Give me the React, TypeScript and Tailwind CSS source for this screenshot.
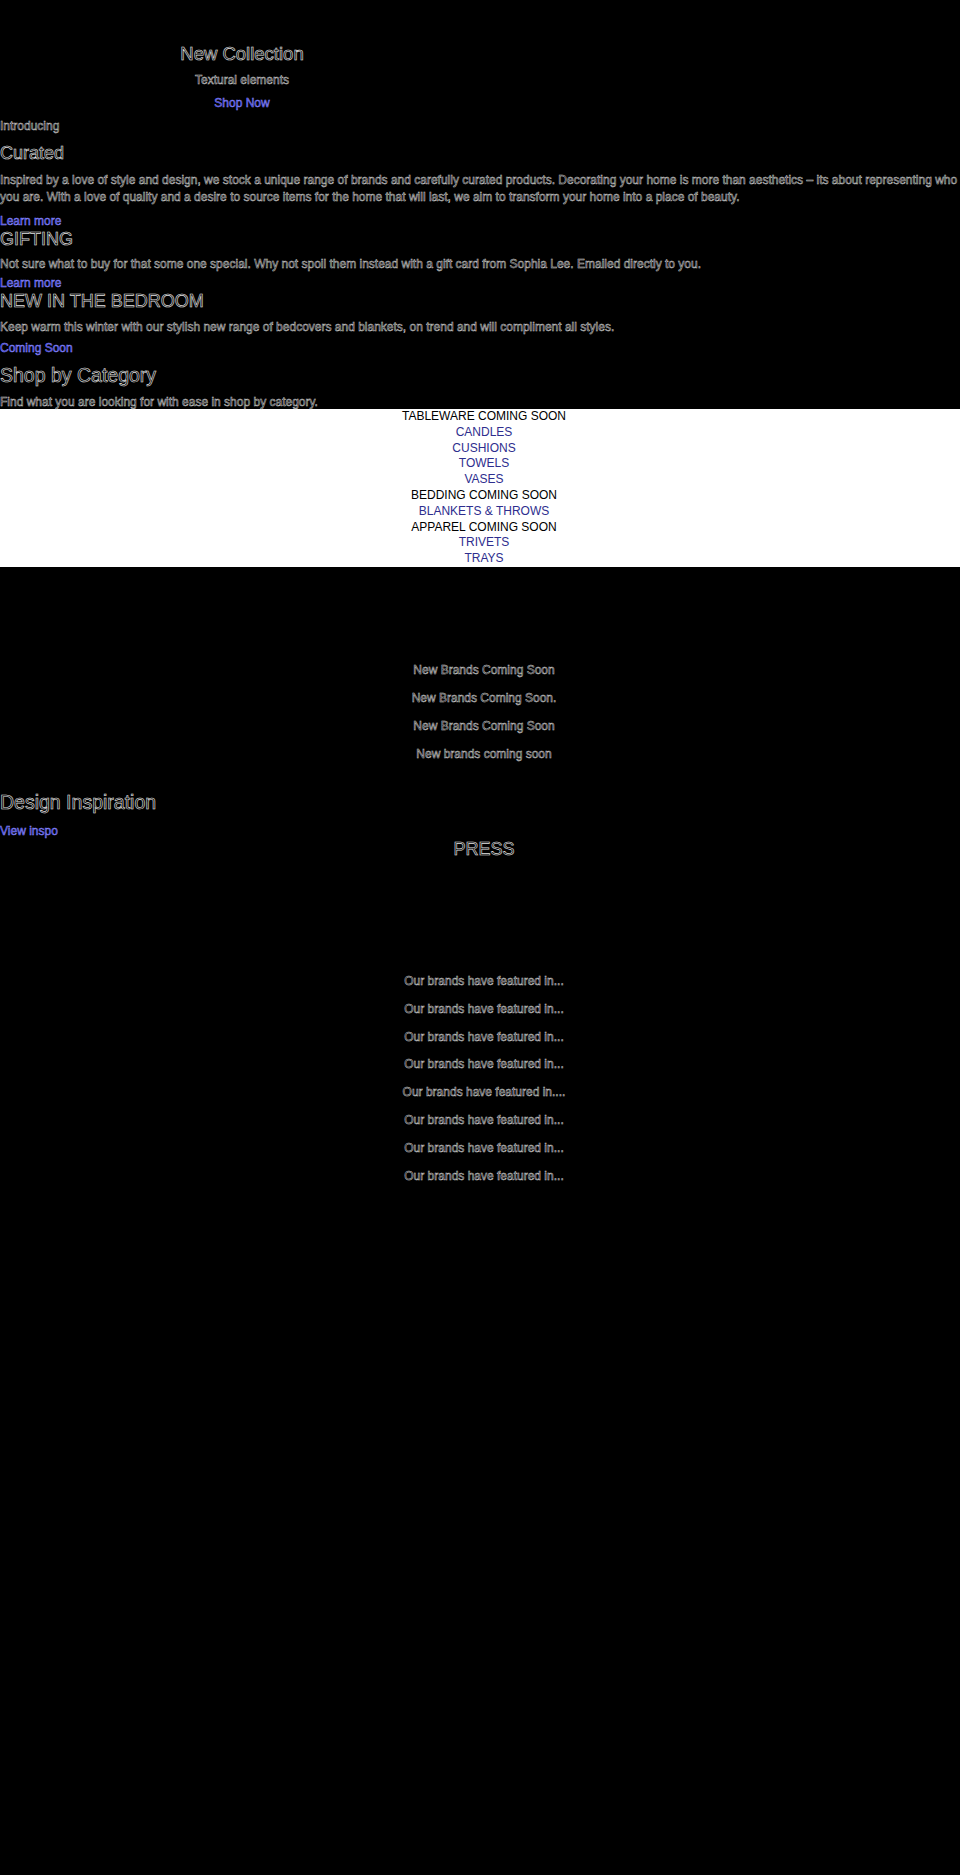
import React from "react";

const font = "font-['Liberation_Sans',Arial,sans-serif]";
const hollow = "text-black [-webkit-text-stroke:0.5px_#d0d0d0]";
const hollowHead = "text-black [-webkit-text-stroke:0.6px_#e4e4e4]";
const link = "text-[#2f2fb8] [-webkit-text-stroke:0.5px_#8c8cff]";

function H({ children, className = "" }: { children: React.ReactNode; className?: string }) {
  return <h2 className={`leading-[20px] font-normal ${hollowHead} ${className}`}>{children}</h2>;
}

function P({ children, className = "" }: { children: React.ReactNode; className?: string }) {
  return <p className={`text-[12px] leading-[16px] ${hollow} ${className}`}>{children}</p>;
}

function L({ children, className = "" }: { children: React.ReactNode; className?: string }) {
  return <a href="#" className={`block text-[12px] leading-[16px] ${link} ${className}`}>{children}</a>;
}

const categories: { label: string; link: boolean }[] = [
  { label: "TABLEWARE COMING SOON", link: false },
  { label: "CANDLES", link: true },
  { label: "CUSHIONS", link: true },
  { label: "TOWELS", link: true },
  { label: "VASES", link: true },
  { label: "BEDDING COMING SOON", link: false },
  { label: "BLANKETS & THROWS", link: true },
  { label: "APPAREL COMING SOON", link: false },
  { label: "TRIVETS", link: true },
  { label: "TRAYS", link: true },
];

const brands = ["New Brands Coming Soon", "New Brands Coming Soon.", "New Brands Coming Soon", "New brands coming soon"];
const press = [
  "Our brands have featured in...",
  "Our brands have featured in...",
  "Our brands have featured in...",
  "Our brands have featured in...",
  "Our brands have featured in....",
  "Our brands have featured in...",
  "Our brands have featured in...",
  "Our brands have featured in...",
];

export default function App() {
  return (
    <div className={`min-h-[1875px] w-full bg-black ${font}`}>
      <section className="w-[484px] pt-[44px] text-center">
        <H className="text-[18.5px]">New Collection</H>
        <P className="mt-[8px]">Textural elements</P>
        <L className="mt-[7px]">Shop Now</L>
      </section>

      <section>
        <P className="mt-[7px]">Introducing</P>
        <H className="mt-[9px] text-[18px]">Curated</H>
        <p className={`mt-[9px] text-[12px] leading-[17px] ${hollow}`}>
          Inspired by a love of style and design, we stock a unique range of brands and carefully curated products. Decorating your home is more than aesthetics – its about representing who you are. With a love of quality and a desire to source items for the home that will last, we aim to transform your home into a place of beauty.
        </p>
        <L className="mt-[7px]">Learn more</L>
      </section>

      <section>
        <H className="text-[18px]">GIFTING</H>
        <p className={`mt-[7px] text-[12px] leading-[17px] ${hollow}`}>
          Not sure what to buy for that some one special. Why not spoil them instead with a gift card from Sophia Lee. Emailed directly to you.
        </p>
        <L className="mt-[2px]">Learn more</L>
      </section>

      <section>
        <H className="text-[18px]">NEW IN THE BEDROOM</H>
        <p className={`mt-[8px] text-[12px] leading-[17px] ${hollow}`}>
          Keep warm this winter with our stylish new range of bedcovers and blankets, on trend and will compliment all styles.
        </p>
        <L className="mt-[4px]">Coming Soon</L>
      </section>

      <section>
        <H className="mt-[9px] text-[19.5px]">Shop by Category</H>
        <p className={`mt-[9px] text-[12px] leading-[16px] ${hollow}`}>
          Find what you are looking for with ease in shop by category.
        </p>
      </section>

      <ul className="-mt-[1px] bg-white pl-2 text-center text-[12px] leading-[15.8px]">
        {categories.map((c, i) => (
          <li key={i}>
            {c.link ? (
              <a href="#" className="text-[#2e2e8e]">{c.label}</a>
            ) : (
              <span className="text-black">{c.label}</span>
            )}
          </li>
        ))}
      </ul>

      <section className="mt-[95px] flex flex-col gap-[12px] pl-2 text-center">
        {brands.map((b, i) => (
          <P key={i}>{b}</P>
        ))}
      </section>

      <section className="mt-[30px]">
        <H className="text-[19.5px]">Design Inspiration</H>
        <L className="mt-[11px]">View inspo</L>
        <H className="pl-2 text-center text-[18px]">PRESS</H>
      </section>

      <section className="mt-[114px] flex flex-col gap-[11.8px] pl-2 text-center">
        {press.map((b, i) => (
          <P key={i}>{b}</P>
        ))}
      </section>
    </div>
  );
}
